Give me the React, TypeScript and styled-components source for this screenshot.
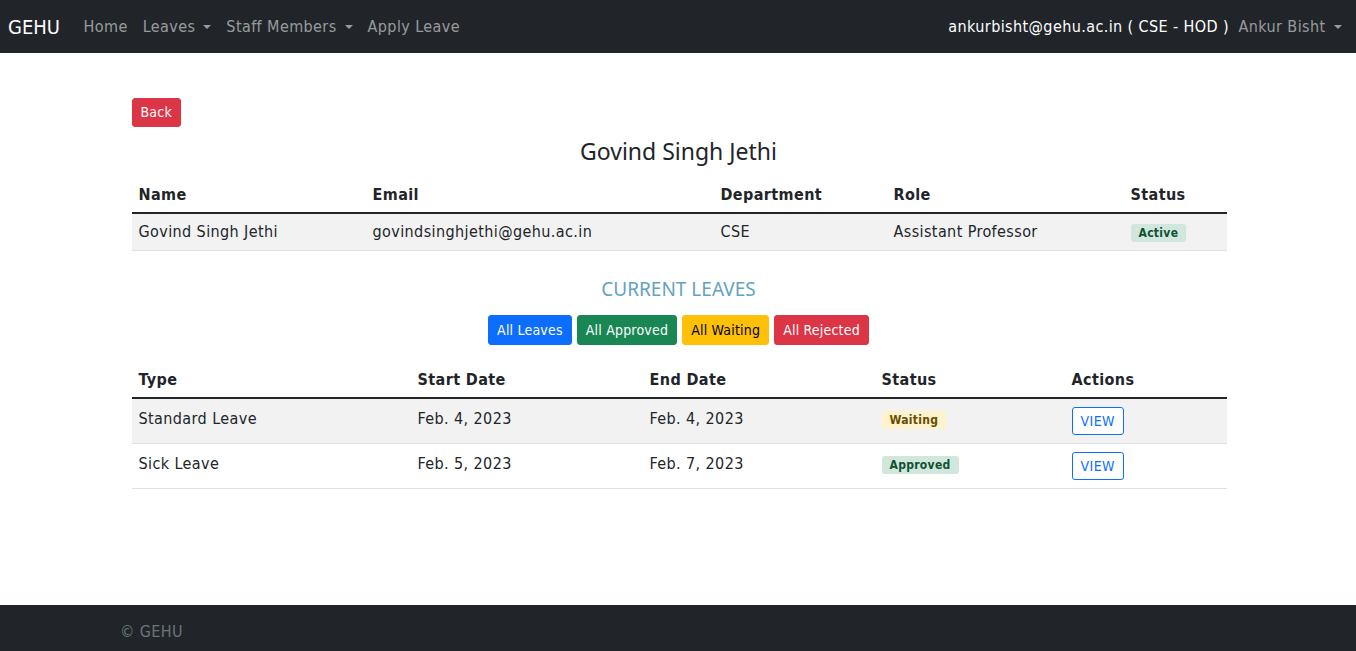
import React from "react";
import styled, { createGlobalStyle } from "styled-components";

const GlobalStyle = createGlobalStyle`
  html, body {
    margin: 0;
    padding: 0;
  }
  body {
    font-family: "DejaVu Sans Condensed", "DejaVu Sans", sans-serif;
    font-stretch: condensed;
    font-size: 16px;
    line-height: 1.5;
    letter-spacing: 0.4px;
    color: #212529;
    background: #fff;
  }
  * {
    box-sizing: border-box;
  }
`;

const Page = styled.div`
  min-height: 100vh;
  display: flex;
  flex-direction: column;
`;

const Navbar = styled.nav`
  height: 53px;
  background: #212529;
  display: flex;
  align-items: center;
  justify-content: space-between;
  padding: 0 7px 0 8px;
`;

const NavLeft = styled.div`
  display: flex;
  align-items: center;
`;

const Brand = styled.a`
  color: #fff;
  font-size: 20px;
  letter-spacing: 0;
  margin-right: 16px;
`;

const NavLink = styled.a`
  color: rgba(255, 255, 255, 0.55);
  padding: 8px 7.5px;
  display: flex;
  align-items: center;
`;

const Caret = styled.span`
  display: inline-block;
  margin-left: 8px;
  border-top: 4px solid currentColor;
  border-left: 4px solid transparent;
  border-right: 4px solid transparent;
`;

const NavRight = styled.div`
  display: flex;
  align-items: center;
`;

const UserEmail = styled.span`
  color: #fff;
  margin-right: 2px;
`;

const Main = styled.main`
  flex: 1;
  width: 1095px;
  margin: 0 auto;
  padding-top: 45px;
  padding-left: 1px;
`;

type Variant = "primary" | "success" | "warning" | "danger";

const colors: Record<Variant, { bg: string; fg: string }> = {
  primary: { bg: "#0d6efd", fg: "#fff" },
  success: { bg: "#198754", fg: "#fff" },
  warning: { bg: "#ffc107", fg: "#000" },
  danger: { bg: "#dc3545", fg: "#fff" },
};

const Button = styled.button<{ $variant: Variant }>`
  font-family: inherit;
  font-stretch: condensed;
  font-size: 14px;
  letter-spacing: 0.2px;
  line-height: 20px;
  padding: 3px 8px 4px;
  border-radius: 3px;
  border: 1px solid ${({ $variant }) => colors[$variant].bg};
  background: ${({ $variant }) => colors[$variant].bg};
  color: ${({ $variant }) => colors[$variant].fg};
  cursor: pointer;
`;

const FilterButton = styled(Button)`
  padding: 4px 8px 4px;
`;

const OutlineButton = styled.button`
  font-family: inherit;
  font-stretch: condensed;
  font-size: 14px;
  letter-spacing: 0.4px;
  line-height: 18px;
  padding: 4px 8px;
  border-radius: 3px;
  border: 1px solid #0d6efd;
  background: #fff;
  color: #0d6efd;
`;

const Heading = styled.h4`
  font-family: "Noto Sans", "Open Sans", sans-serif;
  font-stretch: normal;
  letter-spacing: 0;
  font-weight: 400;
  font-size: 23px;
  line-height: 1.2;
  text-align: center;
  margin: 11px 0 9px;
`;

const SubHeading = styled.h5`
  font-family: "Noto Sans", "Open Sans", sans-serif;
  font-stretch: normal;
  letter-spacing: 0;
  font-weight: 400;
  font-size: 19px;
  line-height: 1.2;
  color: #62a3bd;
  text-align: center;
  margin: 27px 0 15px;
`;

const Filters = styled.div`
  display: flex;
  justify-content: center;
  gap: 5px;
  margin-bottom: 15px;
`;

const Table = styled.table`
  width: 100%;
  border-collapse: collapse;
  table-layout: fixed;
`;

const Th = styled.th<{ $w: number }>`
  width: ${({ $w }) => $w}px;
  text-align: left;
  font-weight: 700;
  padding: 8px 7px 5px;
  border-bottom: 2px solid #212529;
`;

const Tr = styled.tr<{ $striped?: boolean }>`
  background: ${({ $striped }) => ($striped ? "#f2f2f2" : "#fff")};
  border-bottom: 1px solid #dee2e6;
`;

const Td = styled.td<{ $tall?: boolean }>`
  padding: ${({ $tall }) => ($tall ? "8px 7px 8px" : "6px 7px 6px")};
  vertical-align: top;
`;

type BadgeKind = "success" | "warning";

const badgeColors: Record<BadgeKind, { bg: string; fg: string }> = {
  success: { bg: "#d1e7dd", fg: "#0f5132" },
  warning: { bg: "#fff3cd", fg: "#664d03" },
};

const Badge = styled.span<{ $kind: BadgeKind }>`
  display: inline-block;
  font-size: 12px;
  font-weight: 700;
  letter-spacing: 0.3px;
  line-height: 1;
  padding: 3px 8px;
  border-radius: 3px;
  margin-top: 4px;
  background: ${({ $kind }) => badgeColors[$kind].bg};
  color: ${({ $kind }) => badgeColors[$kind].fg};
`;

const Footer = styled.footer`
  height: 46px;
  background: #212529;
  display: flex;
  align-items: center;
  padding-left: 120px;
  padding-top: 8px;
  color: #6c757d;
`;

const leaves = [
  { type: "Standard Leave", start: "Feb. 4, 2023", end: "Feb. 4, 2023", status: "Waiting" },
  { type: "Sick Leave", start: "Feb. 5, 2023", end: "Feb. 7, 2023", status: "Approved" },
];

function App() {
  return (
    <>
      <GlobalStyle />
      <Page>
        <Navbar>
          <NavLeft>
            <Brand>GEHU</Brand>
            <NavLink>Home</NavLink>
            <NavLink>
              Leaves <Caret />
            </NavLink>
            <NavLink>
              Staff Members <Caret />
            </NavLink>
            <NavLink>Apply Leave</NavLink>
          </NavLeft>
          <NavRight>
            <UserEmail>ankurbisht@gehu.ac.in ( CSE - HOD )</UserEmail>
            <NavLink>
              Ankur Bisht <Caret />
            </NavLink>
          </NavRight>
        </Navbar>

        <Main>
          <Button $variant="danger">Back</Button>
          <Heading>Govind Singh Jethi</Heading>
          <Table>
            <thead>
              <tr>
                <Th $w={234}>Name</Th>
                <Th $w={348}>Email</Th>
                <Th $w={173}>Department</Th>
                <Th $w={237}>Role</Th>
                <Th $w={103}>Status</Th>
              </tr>
            </thead>
            <tbody>
              <Tr $striped>
                <Td>Govind Singh Jethi</Td>
                <Td>govindsinghjethi@gehu.ac.in</Td>
                <Td>CSE</Td>
                <Td>Assistant Professor</Td>
                <Td>
                  <Badge $kind="success">Active</Badge>
                </Td>
              </Tr>
            </tbody>
          </Table>

          <SubHeading>CURRENT LEAVES</SubHeading>
          <Filters>
            <FilterButton $variant="primary">All Leaves</FilterButton>
            <FilterButton $variant="success">All Approved</FilterButton>
            <FilterButton $variant="warning">All Waiting</FilterButton>
            <FilterButton $variant="danger">All Rejected</FilterButton>
          </Filters>

          <Table>
            <thead>
              <tr>
                <Th $w={279}>Type</Th>
                <Th $w={232}>Start Date</Th>
                <Th $w={232}>End Date</Th>
                <Th $w={190}>Status</Th>
                <Th $w={162}>Actions</Th>
              </tr>
            </thead>
            <tbody>
              {leaves.map((l, i) => (
                <Tr key={l.type} $striped={i % 2 === 0}>
                  <Td $tall>{l.type}</Td>
                  <Td $tall>{l.start}</Td>
                  <Td $tall>{l.end}</Td>
                  <Td $tall>
                    <Badge $kind={l.status === "Approved" ? "success" : "warning"}>{l.status}</Badge>
                  </Td>
                  <Td $tall>
                    <OutlineButton>VIEW</OutlineButton>
                  </Td>
                </Tr>
              ))}
            </tbody>
          </Table>
        </Main>

        <Footer>© GEHU</Footer>
      </Page>
    </>
  );
}

export default App;
